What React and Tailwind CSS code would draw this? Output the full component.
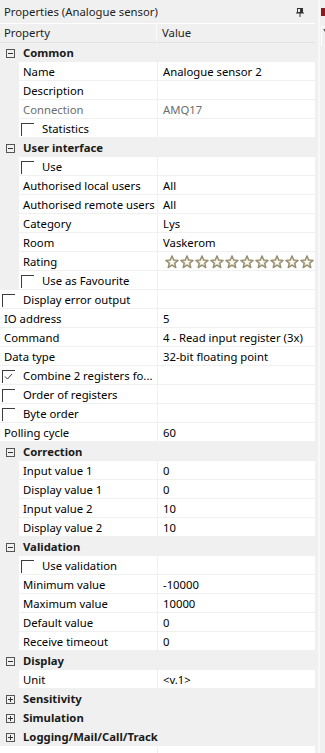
import React from 'react'

const rows = [
  { cat: 'Common', open: true },
  { name: 'Name', value: 'Analogue sensor 2', sub: true },
  { name: 'Description', value: '', sub: true },
  { name: 'Connection', value: 'AMQ17', sub: true, disabled: true },
  { name: 'Statistics', check: false, sub: true },
  { cat: 'User interface', open: true },
  { name: 'Use', check: false, sub: true },
  { name: 'Authorised local users', value: 'All', sub: true },
  { name: 'Authorised remote users', value: 'All', sub: true },
  { name: 'Category', value: 'Lys', sub: true },
  { name: 'Room', value: 'Vaskerom', sub: true },
  { name: 'Rating', stars: 10, sub: true },
  { name: 'Use as Favourite', check: false, sub: true },
  { name: 'Display error output', check: false },
  { name: 'IO address', value: '5' },
  { name: 'Command', value: '4 - Read input register (3x)' },
  { name: 'Data type', value: '32-bit floating point' },
  { name: 'Combine 2 registers fo...', check: true },
  { name: 'Order of registers', check: false },
  { name: 'Byte order', check: false },
  { name: 'Polling cycle', value: '60' },
  { cat: 'Correction', open: true },
  { name: 'Input value 1', value: '0', sub: true },
  { name: 'Display value 1', value: '0', sub: true },
  { name: 'Input value 2', value: '10', sub: true },
  { name: 'Display value 2', value: '10', sub: true },
  { cat: 'Validation', open: true },
  { name: 'Use validation', check: false, sub: true },
  { name: 'Minimum value', value: '-10000', sub: true },
  { name: 'Maximum value', value: '10000', sub: true },
  { name: 'Default value', value: '0', sub: true },
  { name: 'Receive timeout', value: '0', sub: true },
  { cat: 'Display', open: true },
  { name: 'Unit', value: '<v.1>', sub: true },
  { cat: 'Sensitivity', open: false },
  { cat: 'Simulation', open: false },
  { cat: 'Logging/Mail/Call/Track', open: false },
  { name: '', value: '' },
]

function Expander({ open }) {
  return (
    <svg width="9" height="9" viewBox="0 0 9 9" className="shrink-0">
      <rect x="0.5" y="0.5" width="8" height="8" fill="none" stroke="#555" />
      <line x1="2" y1="4.5" x2="7" y2="4.5" stroke="#333" />
      {!open && <line x1="4.5" y1="2" x2="4.5" y2="7" stroke="#333" />}
    </svg>
  )
}

function CheckBox({ checked }) {
  return (
    <div className="w-[13px] h-[13px] border-l border-t border-[#3c3c3c] shrink-0 relative">
      {checked && (
        <svg width="13" height="13" viewBox="0 0 13 13" className="absolute -left-px -top-px">
          <path d="M3 6.5 L5.5 9 L10 4" fill="none" stroke="#333" strokeWidth="1" />
        </svg>
      )}
    </div>
  )
}

function Star() {
  return (
    <svg width="14" height="14" viewBox="0 0 24 24" className="shrink-0">
      <path
        d="M12 1.5 L14.9 8.6 L22.5 9.2 L16.7 14.1 L18.5 21.6 L12 17.5 L5.5 21.6 L7.3 14.1 L1.5 9.2 L9.1 8.6 Z"
        fill="#e6e1cf"
        stroke="#968e70"
        strokeWidth="2.4"
        strokeLinejoin="round"
      />
      <path d="M12 7 L13.3 10.6 L17 10.9 L14.2 13.3 L15 17 L12 15 L9 17 L9.8 13.3 L7 10.9 L10.7 10.6 Z" fill="#fbfaf5" />
    </svg>
  )
}

function Row({ r }) {
  if (r.cat) {
    return (
      <div className="h-[19px] shrink-0 flex items-center bg-[#f0f0f0] pt-px">
        <div className="w-[19px] flex justify-center pl-px">
          <Expander open={r.open} />
        </div>
        <span className="pl-[4px] font-bold text-[#1a1a1a]">{r.cat}</span>
      </div>
    )
  }
  const color = r.disabled ? 'text-[#6d6d6d]' : 'text-black'
  return (
    <div className="h-[19px] shrink-0 flex bg-[#f0f0f0]">
      {r.sub && <div className="w-[19px] shrink-0" />}
      <div className={`${r.sub ? 'w-[138px]' : 'w-[157px]'} shrink-0 h-[18px] bg-white flex items-center overflow-hidden whitespace-nowrap pt-px ${color}`}>
        {r.check !== undefined ? (
          <>
            <div className="pl-[2px] pt-px">
              <CheckBox checked={r.check} />
            </div>
            <span className="pl-[8px]">{r.name}</span>
          </>
        ) : (
          <span className="pl-[4px]">{r.name}</span>
        )}
      </div>
      <div className="w-px shrink-0" />
      <div className={`flex-1 h-[18px] bg-white flex items-center whitespace-nowrap pt-px ${color}`}>
        {r.stars ? (
          <div className="flex gap-[1px] pl-[7px]">
            {Array.from({ length: r.stars }).map((_, i) => (
              <Star key={i} />
            ))}
          </div>
        ) : (
          <span className="pl-[5px]">{r.value}</span>
        )}
      </div>
    </div>
  )
}

export default function App() {
  return (
    <div
      className="w-[325px] h-[753px] overflow-hidden flex bg-[#f0f0f0] text-[11.3px] leading-none"
      style={{ fontFamily: '"Noto Sans", "Open Sans", sans-serif' }}
    >
      <div className="w-[318px] flex flex-col shrink-0">
        <div className="h-[23px] shrink-0 flex items-center justify-between pl-[4px] pr-[14px] pt-px bg-[#f0f0f0] text-[#1e1e1e]">
          <span>Properties (Analogue sensor)</span>
          <svg width="8" height="9" viewBox="0 0 8 9">
            <rect x="1.5" y="0.5" width="5" height="4" fill="none" stroke="#333" />
            <rect x="4" y="1" width="2" height="3" fill="#333" />
            <line x1="0" y1="5" x2="8" y2="5" stroke="#333" />
            <line x1="4" y1="5" x2="4" y2="9" stroke="#333" />
          </svg>
        </div>
        <div className="w-[315px] h-[20px] shrink-0 flex border-t border-white border-b border-b-[#e3e3e3] bg-[#f0f0f0] text-[#1e1e1e]">
          <div className="w-[157px] flex items-center pl-[4px] border-r border-[#fafafa]">Property</div>
          <div className="flex-1 flex items-center pl-[5px]">Value</div>
        </div>
        <div className="w-[315px] flex flex-col shrink-0">
          {rows.map((r, i) => (
            <Row key={i} r={r} />
          ))}
        </div>
      </div>
      <div className="w-[2px] shrink-0 bg-[#f8f8f8]" />
      <div className="flex-1 bg-[#f0f0f0] flex flex-col pt-[8px] pl-[1px]">
        <div className="h-[8px] w-[4px] shrink-0 bg-[#8b1c1c]" />
        <div className="mt-[10px] h-[20px] shrink-0 border-l border-t border-white pl-px pt-[2px]">
          <svg width="4" height="4" viewBox="0 0 4 4">
            <path d="M0 0 L4 0 L2 3 Z" fill="#666" />
          </svg>
        </div>
      </div>
    </div>
  )
}
